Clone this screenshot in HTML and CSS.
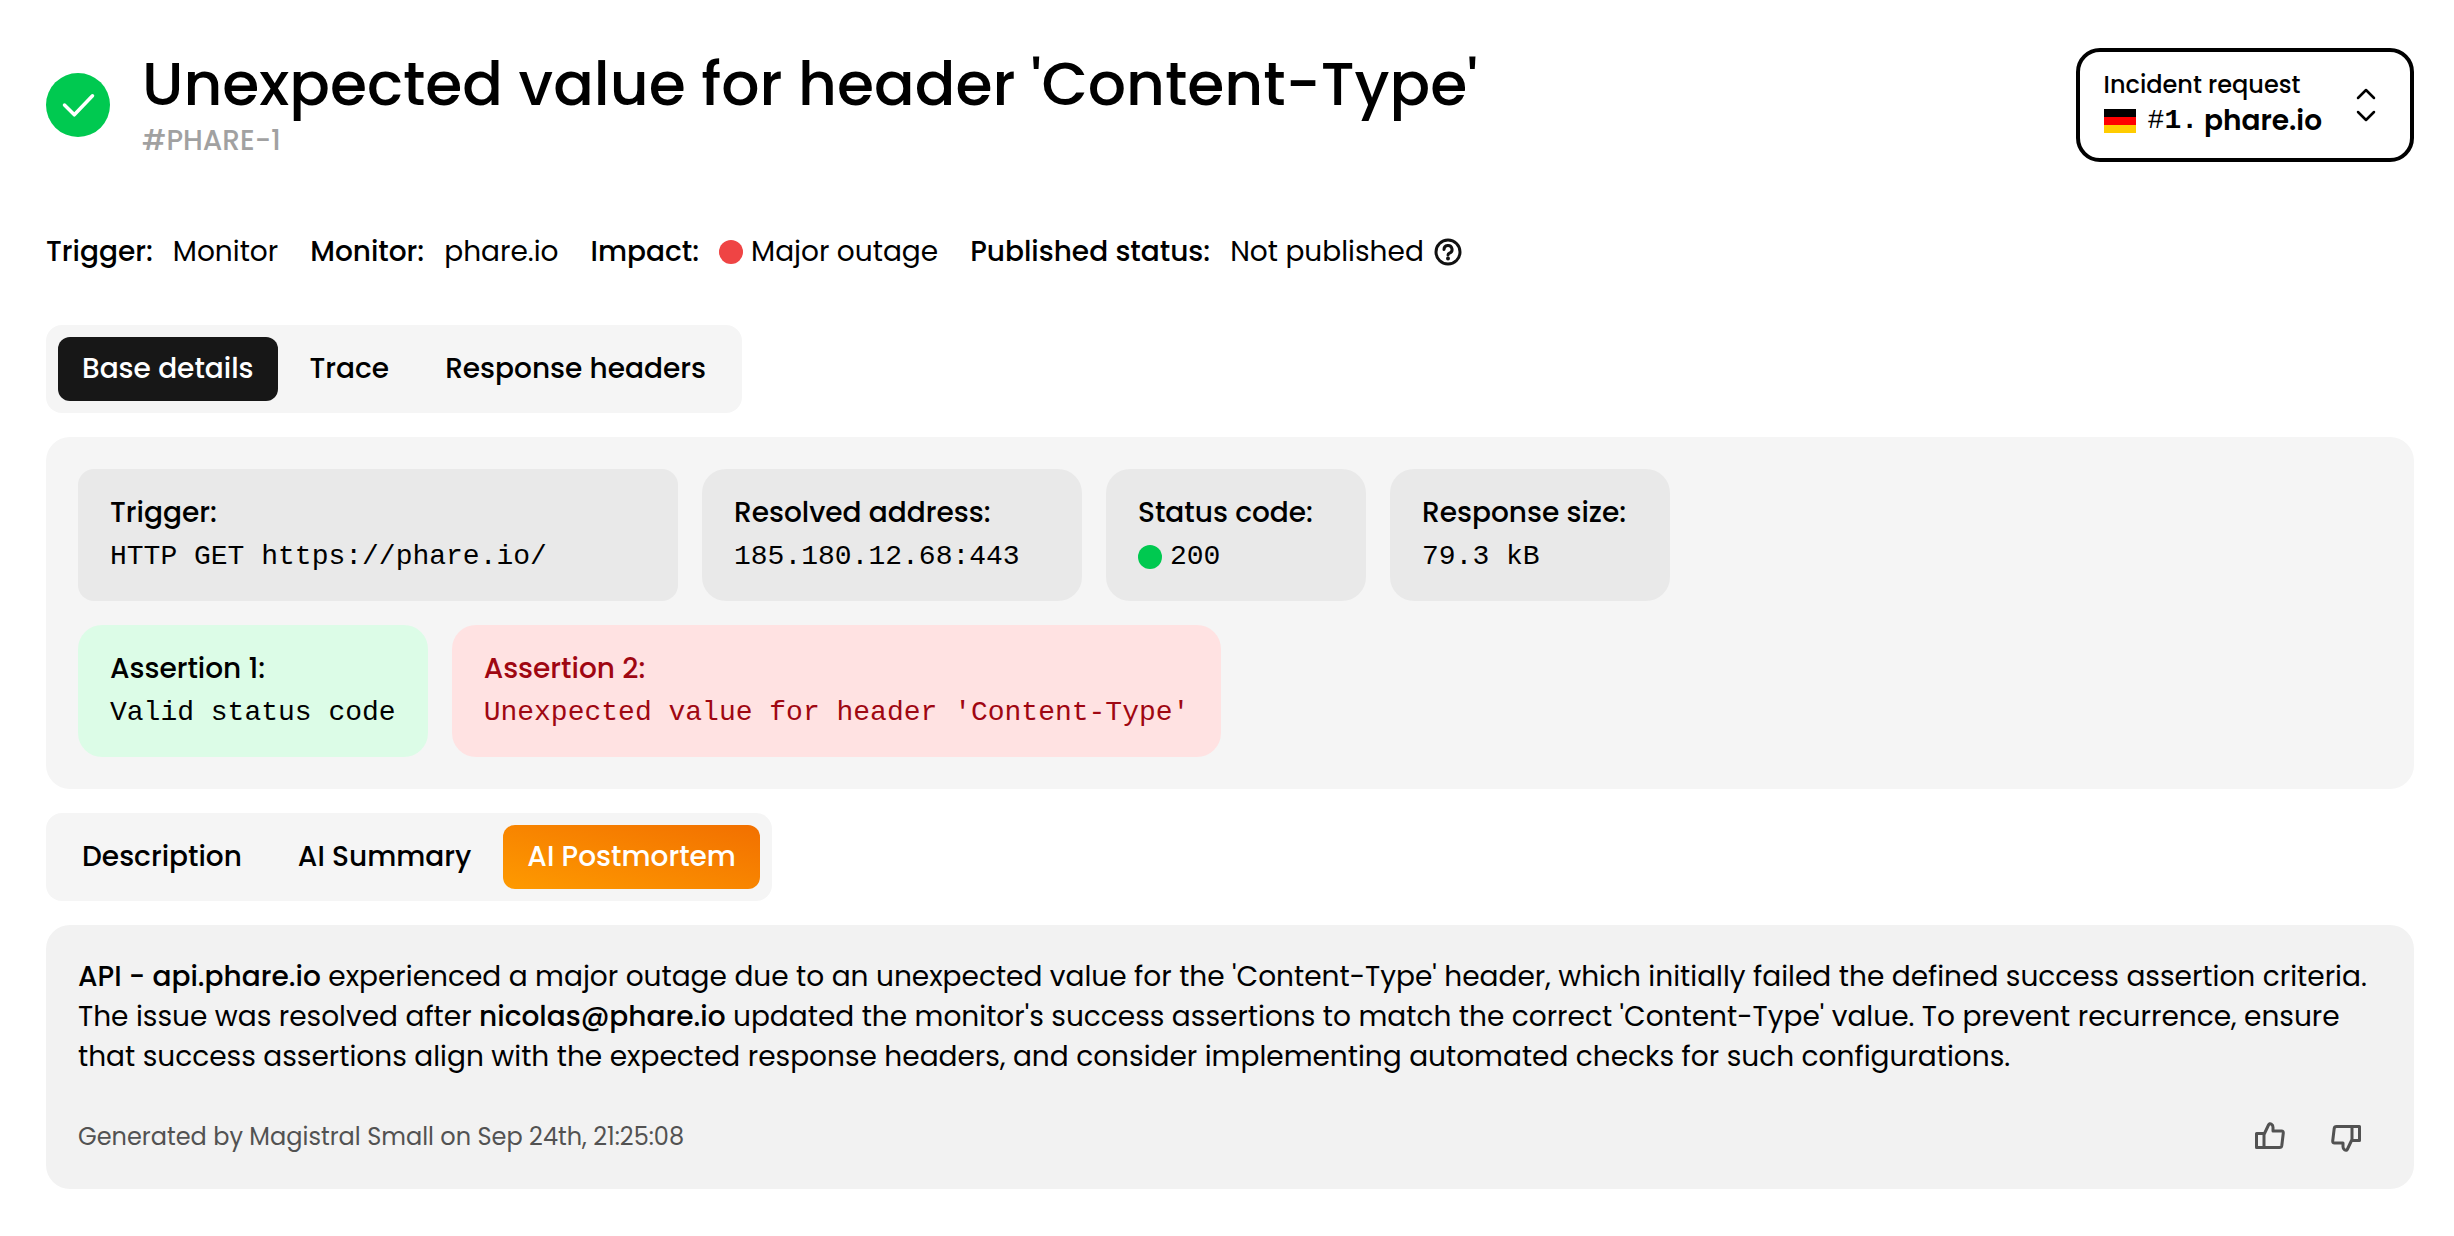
FILE: index.html
```html
<!DOCTYPE html>
<html lang="en">
<head>
<meta charset="utf-8">
<title>Unexpected value for header 'Content-Type'</title>
<meta name="viewport" content="width=device-width, initial-scale=1">
<link rel="stylesheet" href="styles.css">
</head>
<body>
<main class="page">
  <header class="header">
    <svg class="state" viewBox="0 0 64 64" role="img" aria-label="Resolved"><circle cx="32" cy="32" r="32" fill="#00c950"/><path d="M18.500 32l9.800 9.800L46.500 22.800" fill="none" stroke="#fff" stroke-width="3.500" stroke-linecap="round" stroke-linejoin="round"/></svg>
    <div class="heading">
      <h1 class="title">Unexpected value for header 'Content-Type'</h1>
      <p class="ref">#PHARE-1</p>
    </div>
    <button class="picker" type="button">
      <span class="picker-body">
        <span class="picker-label">Incident request</span>
        <span class="picker-value">
          <svg class="flag" viewBox="0 0 32 24" aria-hidden="true"><path fill="#000" d="M0 0h32v8H0z"/><path fill="#f00" d="M0 8h32v8H0z"/><path fill="#fc0" d="M0 16h32v8H0z"/></svg>
          <span class="picker-index"><span class="hash">#</span>1.</span>
          <span>phare.io</span>
        </span>
      </span>
      <svg class="chevrons" viewBox="0 0 20 34" aria-hidden="true"><path d="M2 10l8-8 8 8M2 24l8 8 8-8" fill="none" stroke="#000" stroke-width="2.500" stroke-linecap="round" stroke-linejoin="round"/></svg>
    </button>
  </header>

  <dl class="meta">
    <div class="meta-item"><dt>Trigger:</dt><dd>Monitor</dd></div>
    <div class="meta-item"><dt>Monitor:</dt><dd>phare.io</dd></div>
    <div class="meta-item"><dt>Impact:</dt><dd><span class="dot dot-red"></span>Major outage</dd></div>
    <div class="meta-item"><dt>Published status:</dt><dd>Not published<svg class="help" viewBox="0 0 28 28" aria-hidden="true"><circle cx="14" cy="14" r="12" /><path d="M10 11.500a4 4 0 1 1 5.500 3.700c-1 .5-1.500 1-1.500 1.800"/><circle class="help-dot" cx="14" cy="20.500" r="2"/></svg></dd></div>
  </dl>

  <nav class="tabs" aria-label="Request">
    <button class="tab tab-dark" type="button">Base details</button>
    <button class="tab" type="button">Trace</button>
    <button class="tab" type="button">Response headers</button>
  </nav>

  <section class="panel">
    <div class="cards">
      <div class="card card-trigger"><h2>Trigger:</h2><p>HTTP GET https://phare.io/</p></div>
      <div class="card card-address"><h2>Resolved address:</h2><p>185.180.12.68:443</p></div>
      <div class="card card-status"><h2>Status code:</h2><p><span class="dot dot-green"></span>200</p></div>
      <div class="card card-size"><h2>Response size:</h2><p>79.3 kB</p></div>
    </div>
    <div class="cards">
      <div class="card card-ok"><h2>Assertion 1:</h2><p>Valid status code</p></div>
      <div class="card card-fail"><h2>Assertion 2:</h2><p>Unexpected value for header 'Content-Type'</p></div>
    </div>
  </section>

  <nav class="tabs" aria-label="Report">
    <button class="tab" type="button">Description</button>
    <button class="tab" type="button">AI Summary</button>
    <button class="tab tab-orange" type="button">AI Postmortem</button>
  </nav>

  <section class="panel report">
    <p class="summary"><strong>API - api.phare.io</strong> experienced a major outage due to an unexpected value for the 'Content-Type' header, which initially failed the defined success assertion criteria. The issue was resolved after <strong>nicolas@phare.io</strong> updated the monitor's success assertions to match the correct 'Content-Type' value. To prevent recurrence, ensure that success assertions align with the expected response headers, and consider implementing automated checks for such configurations.</p>
    <footer class="report-footer">
      <p class="generated">Generated by Magistral Small on Sep 24th, 21:25:08</p>
      <div class="votes">
        <button class="vote" type="button" aria-label="Helpful"><svg viewBox="0 0 32 32"><path d="M2.500 12.500h7.500v14H2.500zM10 13.500L14.500 4q1-2.200 3-.8 1.500 1 1.500 3V10h8.500q2 0 1.800 2l-1.500 12.500q-.3 2-2.300 2H10z"/></svg></button>
        <button class="vote" type="button" aria-label="Not helpful"><svg viewBox="0 0 32 32"><path d="M29.500 19.500H22v-14h7.500zM22 18.500L17.500 28q-1 2.200-3 .8-1.500-1-1.500-3V22H4.500q-2 0-1.800-2L4.200 7.500q.3-2 2.300-2H22z"/></svg></button>
      </div>
    </footer>
  </section>
</main>
</body>
</html>
```
FILE: styles.css
```css
* { box-sizing: border-box; }
body, h1, h2, p, dl, dd { margin: 0; }
body {
  background: #fff;
  color: #000;
  font: 400 28px/40px "Poppins", "Inter", sans-serif;
}
button { font: inherit; color: inherit; border: 0; background: none; padding: 0; cursor: pointer; }
.page { display: flex; flex-direction: column; gap: 24px; padding: 48px 40px 48px 46px; }

.header { display: flex; align-items: center; }
.state { width: 64px; height: 64px; flex: none; }
.heading { margin-left: 32px; flex: 1; }
.title { font-size: 60px; line-height: 72px; font-weight: 500; }
.ref { color: #a1a1a1; font-weight: 500; line-height: 42px; }
.picker {
  display: flex; align-items: center; gap: 34px;
  border: 4px solid #000; border-radius: 24px;
  padding: 17px 34px 17px 24px; text-align: left;
}
.picker-body { display: flex; flex-direction: column; gap: 4px; padding-bottom: 4px; }
.picker-label { font-size: 24px; line-height: 32px; font-weight: 500; }
.picker-value { display: flex; align-items: center; font-weight: 600; line-height: 32px; gap: 6px; }
.picker-index { font-family: "Liberation Mono", monospace; font-weight: 700; }
.hash { font-weight: 400; }
.flag { width: 32px; height: 24px; margin-right: 6px; }
.chevrons { width: 20px; height: 34px; }

.meta { display: flex; flex-wrap: wrap; gap: 32px; margin: 46px 0 29px; }
.meta-item { display: flex; gap: 20px; }
.meta dt { font-weight: 500; }
.meta dd { display: flex; align-items: center; gap: 8px; }
.dot { width: 24px; height: 24px; border-radius: 50%; flex: none; }
.dot-red { background: #ef4444; }
.dot-green { background: #00c950; }
.help { width: 28px; height: 28px; margin-left: 2px; fill: none; stroke: #111; stroke-width: 3; stroke-linecap: round; }
.help .help-dot { fill: #111; stroke: none; }

.tabs { display: flex; gap: 8px; align-self: flex-start; padding: 12px; border-radius: 16px; background: #f5f5f5; }
.tab { padding: 12px 24px; border-radius: 12px; font-weight: 500; line-height: 40px; }
.tab-dark { background: #171717; color: #fff; }
.tab-orange { background: linear-gradient(to top right, #fe9a00, #f27000); color: #fff; }

.panel { display: flex; flex-direction: column; gap: 24px; padding: 32px; border-radius: 24px; background: #f5f5f5; }
.cards { display: flex; flex-wrap: wrap; gap: 24px; }
.card { padding: 24px 32px; border-radius: 24px; background: #e9e9e9; }
.card h2 { margin-bottom: 4px; font-size: 28px; line-height: 40px; font-weight: 500; }
.card p { display: flex; align-items: center; gap: 8px; font-family: "Liberation Mono", monospace; }
.card-trigger { width: 600px; border-radius: 16px; }
.card-address { width: 380px; }
.card-status { width: 260px; }
.card-size { width: 280px; }
.card-ok { background: #dcfce7; }
.card-fail { background: #ffe2e2; color: #9f0712; }

.report { background: #f2f2f2; gap: 40px; }
.summary strong { font-weight: 500; }
.report-footer { display: flex; align-items: center; justify-content: space-between; }
.generated { font-size: 24px; color: #525252; }
.votes { display: flex; gap: 44px; padding-right: 20px; }
.vote { width: 32px; height: 32px; }
.vote svg { display: block; fill: none; stroke: #525252; stroke-width: 3; stroke-linejoin: round; }
```
